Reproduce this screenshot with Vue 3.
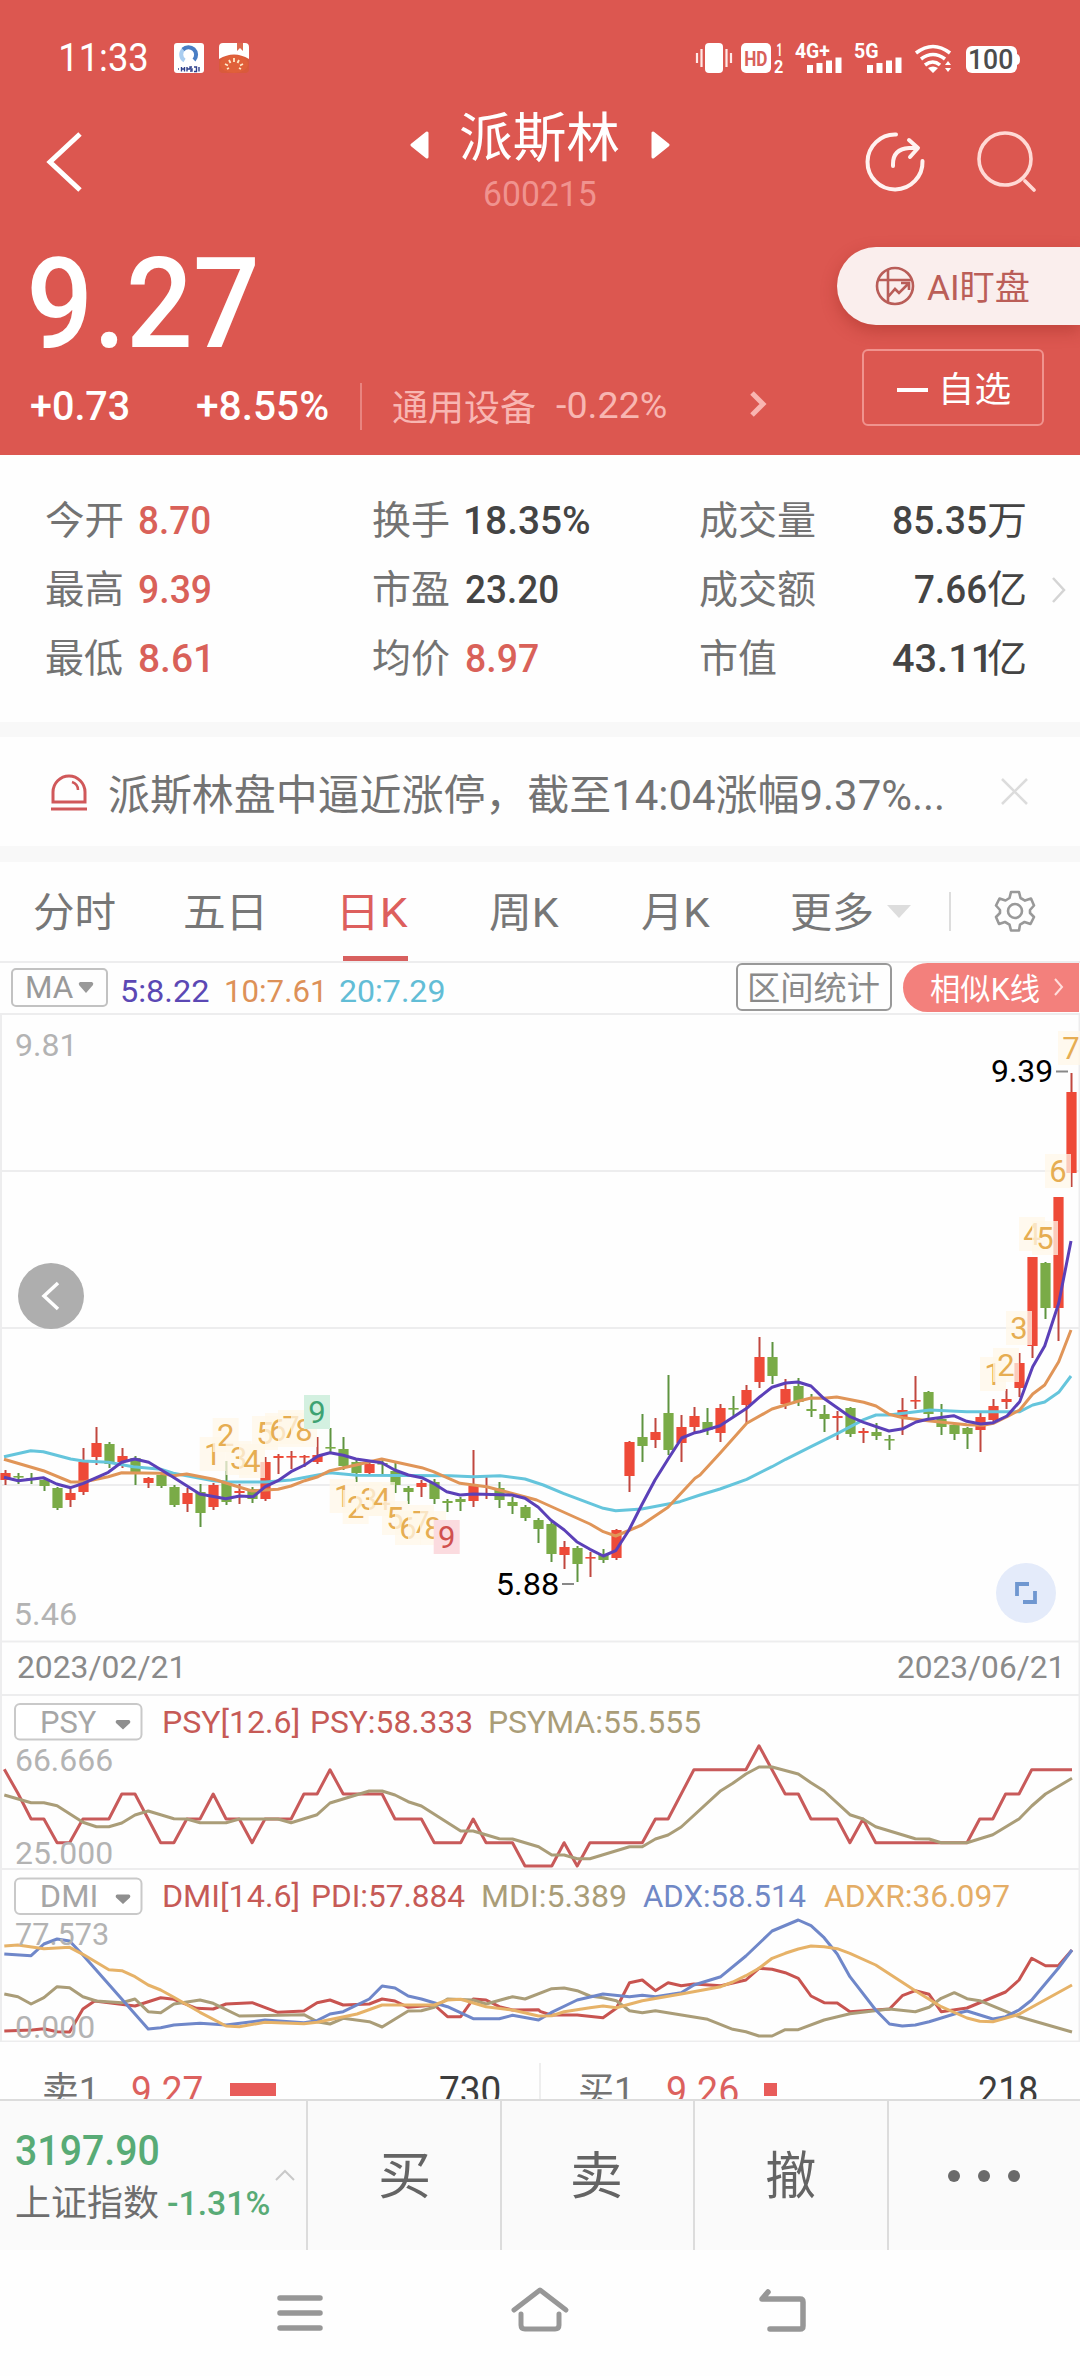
<script setup>
const canvas = document.createElement('canvas').getContext('2d')

// Stretches a label so that its ink is exactly the given width.
// HTML: v-fit="width". SVG: v-fit="[x, baseline, width]".
const vFit = {
  mounted(el, { value }) {
    const cs = getComputedStyle(el)
    canvas.font = `${cs.fontWeight} ${cs.fontSize} ${cs.fontFamily}`
    const m = canvas.measureText(el.textContent.trim())
    const left = -m.actualBoundingBoxLeft
    const ink = m.actualBoundingBoxRight - left
    if (Array.isArray(value)) {
      const [x, y, w] = value
      const k = w / ink
      el.setAttribute('transform', `translate(${x - left * k} ${y}) scale(${k} 1)`)
    } else {
      const k = value / ink
      el.style.width = `${value}px`
      el.style.transform = `translateX(${-left * k}px) scaleX(${k})`
    }
  },
}

const stats = [
  ['今开', 76, '8.70', 71, true], ['换手', 76, '18.35%', 123, false], ['成交量', 115, '85.35', 93, false, '万'],
  ['最高', 76, '9.39', 71, true], ['市盈', 76, '23.20', 92, false], ['成交额', 115, '7.66', 71, false, '亿'],
  ['最低', 76, '8.61', 69, true], ['均价', 76, '8.97', 72, true], ['市值', 76, '43.11', 93, false, '亿'],
]

const tabs = [
  ['分时', 81, 't1'], ['五日', 77, 't2'], ['日K', 65, 't3'], ['周K', 69, 't4'], ['月K', 68, 't5'], ['更多', 81, 't6'],
]

// direction, high, body top, body bottom, low
const candles = `r 1470 1473 1480 1485|g 1473 1476 1477 1484|g 1473 1478 1479 1484|g 1477 1480 1486 1491|g 1487 1488 1508 1510
r 1489 1493 1500 1507|r 1448 1462 1492 1495|r 1427 1443 1457 1465|g 1442 1444 1464 1468|r 1448 1456 1462 1468
g 1456 1458 1472 1485|r 1477 1478 1483 1488|g 1473 1475 1486 1488|g 1485 1487 1505 1507|r 1488 1493 1504 1512
g 1484 1492 1513 1527|r 1483 1485 1507 1510|g 1461 1483 1502 1505|r 1484 1491 1493 1504|g 1487 1489 1499 1503
r 1457 1462 1499 1501|r 1454 1456 1458 1474|r 1451 1456 1457 1469|r 1455 1456 1457 1467|r 1437 1455 1462 1464
g 1428 1447 1448 1453|g 1437 1449 1466 1470|g 1460 1462 1473 1482|r 1463 1464 1473 1474|g 1460 1463 1464 1475
g 1463 1471 1485 1493|g 1486 1488 1492 1504|r 1480 1483 1487 1497|g 1479 1482 1499 1504|g 1499 1501 1503 1512
g 1497 1499 1502 1511|r 1450 1486 1501 1507|r 1477 1493 1495 1499|g 1482 1488 1500 1508|g 1497 1502 1506 1514
g 1505 1507 1518 1521|g 1518 1520 1529 1543|g 1522 1524 1554 1562|r 1541 1547 1555 1569|g 1546 1548 1564 1582
r 1552 1557 1558 1577|g 1549 1554 1560 1563|r 1529 1530 1558 1560|r 1441 1442 1476 1492|g 1414 1437 1446 1462
r 1418 1432 1440 1448|g 1375 1413 1450 1455|r 1415 1427 1443 1462|r 1407 1416 1427 1432|g 1408 1422 1430 1435
r 1404 1408 1433 1442|g 1396 1408 1409 1417|r 1385 1390 1405 1423|r 1337 1357 1382 1388|g 1342 1357 1376 1384
r 1379 1389 1404 1409|g 1378 1386 1402 1406|g 1394 1409 1411 1417|g 1405 1414 1419 1432|r 1411 1416 1418 1440
g 1407 1408 1434 1437|r 1428 1431 1433 1443|g 1423 1432 1436 1440|g 1435 1439 1440 1450|r 1398 1410 1417 1435
r 1376 1400 1401 1409|g 1391 1392 1414 1418|g 1404 1419 1427 1435|g 1423 1425 1434 1440|g 1427 1428 1434 1449
r 1413 1417 1430 1452|r 1399 1406 1420 1423|r 1389 1399 1402 1409|r 1353 1363 1388 1397|r 1257 1257 1346 1358
g 1262 1263 1308 1319|r 1197 1197 1308 1341|r 1073 1092 1173 1187`
  .split(/[|\n]/)
  .map((row, i) => {
    const [dir, ...v] = row.trim().split(' ')
    const [high, top, bottom, low] = v.map(Number)
    return { dir, high, top, low, x: 5.4 + i * 13, h: Math.max(bottom - top, 1.6) }
  })

// Joins runs of "x,y" pairs; every run has its own origin and horizontal scale.
const join = (...runs) =>
  runs
    .map(([ox, oy, sx, pts]) =>
      pts.split(' ').map((p) => {
        const [x, y] = p.split(',').map(Number)
        return `${(ox + x / sx).toFixed(1)},${(oy + y / 3).toFixed(1)}`
      }).join(' '))
    .join(' ')

const averages = [
  { color: '#65c5dc', points: join(
    [0, 1260, 3, '12,590 92,572 130,575 212,597 250,603 325,607 400,620 482,628 520,640 640,662 680,666 796,666 873,660 990,638'],
    [330, 1300, 3, '80,526 360,527 430,530 510,527 585,537 640,555 700,580 820,625 857,632 935,627 1050,605'],
    [700, 1260, 3, '0,705 60,687 140,658 216,620 257,598 333,560 413,520 491,479 528,465 567,465 648,455 690,450 800,455 921,455 959,455 998,435 1034,426 1076,397 1113,348']) },
  { color: '#e09558', points: join(
    [0, 1260, 3, '12,598 130,632 212,666 250,666 325,650 365,638 482,640 520,647 560,642 641,658 756,693 796,690 834,688 873,678 914,662 954,650 990,632 1068,615'],
    [330, 1300, 3, '155,477 275,503 310,515 390,550 470,560 620,600 780,672 820,695 857,708 935,675 1014,622 1095,535'],
    [700, 1260, 3, '0,645 60,580 140,490 216,447 294,424 333,414 371,415 410,411 491,427 528,438 567,463 609,473 648,478 683,482 800,494 850,496 880,490 921,470 959,450 998,402 1034,375 1076,305 1113,210']) },
  { color: '#5b40b8', points: join(
    [0, 1260, 3, '12,652 55,662 130,653 170,672 212,683 250,670 325,637 365,607 404,597 446,607 520,652 599,702 677,716 719,708 760,710 796,680 834,662 873,635 914,615 954,588 990,578'],
    [330, 1300, 3, '40,466 78,477 155,488 194,510 235,525 275,533 310,550 350,575 390,585 430,582 545,585 585,595 625,622 662,660 703,690 740,725 780,748 820,768 857,752 897,690 935,615 975,540 1014,478 1055,414 1095,398'],
    [700, 1260, 3, '0,515 60,497 140,445 180,410 216,382 257,369 294,366 333,378 371,415 450,470 491,487 567,513 609,506 648,486 683,478 761,467 800,484 842,492 880,488 921,468 959,425 998,320 1034,258 1076,130 1113,-57']) },
]

const tags = [
  [1, 212.7, 1454], [2, 225.7, 1435], [3, 238.7, 1458], [4, 252, 1461], [5, 265, 1433], [6, 278, 1430], [7, 291, 1427], [8, 304, 1430], [9, 317, 1412, 'up'],
  [1, 342.7, 1496], [2, 355.7, 1507], [3, 369, 1499], [4, 382, 1499], [5, 395, 1518], [6, 408, 1528], [7, 421, 1522], [8, 433, 1528], [9, 446.7, 1537, 'down'],
  [1, 993, 1374], [2, 1006, 1365], [3, 1019, 1328], [4, 1032, 1234], [5, 1045, 1238], [6, 1058, 1171], [7, 1071, 1048],
]

const psy = [
  { color: '#c85a5a', points: join(
    [0, 1640, 2.8, '12,388 50,460 87,537 123,537 160,608 195,608 232,537 305,537 341,462 378,462 450,608 487,608 523,537 560,537 597,462 633,537 670,537 706,608 742,537 815,537 851,462 888,462 924,389 961,462 1070,462 1106,537 1180,537 1216,608 1290,608 1325,537 1361,608 1435,608 1470,678 1545,678'],
    [540, 1640, 2.904, '70,608 108,678 145,608 297,608 335,537 372,537 447,389 598,389 636,317 712,462 750,462 787,537 863,537 900,608 938,537 975,608 1240,608 1277,537 1315,537 1352,462 1391,462 1428,389 1545,389']) },
  { color: '#aa9d78', points: join(
    [0, 1640, 2.8, '12,465 87,488 123,488 160,497 232,547 270,560 305,560 341,549 378,525 415,513 487,536 523,537 560,548 633,548 670,537 778,537 815,548 888,524 924,489 1034,453 1070,453 1106,465 1143,485 1180,498 1290,573 1325,573 1398,596 1435,597 1508,620 1545,645'],
    [540, 1640, 2.904, '70,645 108,656 145,656 260,620 297,620 335,597 372,585 410,561 525,452 560,430 598,402 636,381 674,381 750,402 787,428 825,453 900,524 938,537 975,560 1090,596 1130,597 1165,608 1240,608 1315,584 1391,537 1428,498 1468,462 1545,415']) },
]

const dmi = [
  { color: '#c85450', points: join(
    [0, 1640, 2.8, '12,1173 90,1170 123,1166 160,1175 195,1176 232,1107 265,1083 378,1098 450,1073 487,1078 550,1105 597,1107 633,1092 706,1088 778,1117 851,1113 888,1088 924,1080 961,1095 1034,1092 1070,1077 1106,1083 1143,1102 1216,1095 1253,1130 1290,1130 1325,1077 1361,1080 1398,1100 1435,1110 1508,1109'],
    [540, 1640, 2.904, '0,1114 32,1125 108,1125 183,1133 222,1105 260,1028 297,1020 335,1052 372,1028 410,1037 447,1032 525,1037 598,1020 636,985 674,988 712,998 750,1015 787,1068 825,1088 863,1089 900,1115 1015,1107 1052,1067 1090,1052 1130,1063 1165,1115 1240,1104 1352,1056 1391,1020 1428,955 1468,977 1505,977 1545,930']) },
  { color: '#aa9d78', points: join(
    [0, 1640, 2.8, '12,1062 50,1070 87,1092 123,1073 160,1040 195,1043 232,1070 270,1083 341,1088 378,1077 415,1115 450,1118 487,1092 560,1080 597,1090 670,1128 851,1124 888,1145 924,1152 961,1135 1034,1145 1070,1161 1143,1113 1180,1112 1216,1102 1253,1077 1325,1080 1361,1092 1435,1070 1470,1077 1545,1046'],
    [540, 1640, 2.904, '70,1044 108,1052 145,1068 183,1073 222,1082 260,1112 297,1118 335,1112 487,1138 560,1168 598,1175 636,1188 674,1188 712,1169 750,1169 825,1140 900,1121 1015,1107 1090,1115 1130,1102 1165,1075 1203,1058 1240,1076 1277,1082 1391,1130 1545,1176']) },
  { color: '#6f87c9', points: join(
    [0, 1640, 2.8, '12,942 87,947 123,912 160,897 195,903 232,945 415,1167 450,1163 487,1155 560,1150 633,1155 742,1140 851,1148 888,1142 924,1122 961,1115 1034,1077 1070,1038 1106,1044 1143,1068 1180,1077 1253,1100 1325,1136 1398,1136 1435,1126 1508,1140'],
    [540, 1640, 2.904, '32,1118 108,1080 183,1062 260,1070 297,1066 335,1070 410,1058 447,1035 525,1010 598,948 674,873 750,840 787,857 825,893 863,942 900,1010 975,1110 1015,1152 1052,1158 1090,1155 1130,1145 1203,1122 1240,1113 1315,1137 1352,1130 1391,1110 1428,1080 1505,985 1545,930']) },
  { color: '#e6b268', points: join(
    [0, 1640, 2.8, '12,918 50,915 123,926 195,922 232,943 305,989 341,992 378,1010 415,1035 450,1050 487,1072 560,1117 633,1158 670,1160 742,1147 851,1151 888,1147 1000,1122 1070,1095 1216,1095 1253,1080 1290,1078 1361,1100 1435,1110 1508,1128 1545,1127'],
    [540, 1640, 2.904, '70,1115 145,1103 183,1098 222,1103 297,1082 410,1062 525,1040 560,1026 598,1007 636,985 674,955 712,940 750,927 787,918 825,920 863,926 900,940 975,975 1090,1052 1165,1100 1240,1134 1277,1144 1315,1145 1391,1123 1428,1102 1545,1035']) },
]
</script>

<template>
  <div class="screen">
    <header class="header">
      <div class="status">
        <span v-fit="86" class="clock">11:33</span>
        <svg class="app-a" width="30" height="30" viewBox="0 0 30 30">
          <rect width="30" height="30" rx="3" fill="#fff" />
          <path d="M10.500 17.500A7 7 0 0 1 10 6" fill="none" stroke="#a9cdf0" stroke-width="4" />
          <path d="M9 6.500A7.500 7.500 0 1 1 20 17" fill="none" stroke="#4a7ec4" stroke-width="4" />
          <path d="M4 26h1M7.500 24v4.500M10.500 24v4.500M7.500 26h3M13 24v4.500M13 26h3M18 24h-2v2h2v2h-2M20 24h2.500v4.500H20M25 24v4.500" stroke="#30418c" stroke-width="1.400" fill="none" />
        </svg>
        <svg class="app-b" width="30" height="30" viewBox="0 0 30 30">
          <rect width="30" height="30" rx="4" fill="#d95a3c" />
          <path d="M4 0H26a4 4 0 0 1 4 4V16Q15 7 0 16V4A4 4 0 0 1 4 0Z" fill="#fff" />
          <path d="M18 0h6v8l-3-3-3 3Z" fill="#dc6a50" />
          <ellipse cx="15" cy="21" rx="14" ry="9" fill="#e0603a" />
          <path d="M15 15v4M10 17l1.500 3M20 17l-1.500 3M6 21l3 1.500M24 21l-3 1.500M8 26l2-1M22 26l-2-1" stroke="#ffe9c8" stroke-width="1.800" />
        </svg>
        <svg class="signals" width="326" height="34" viewBox="695 41 326 34" fill="#fff">
          <rect x="705" y="43" width="18" height="30" rx="4" />
          <path d="M697 53v10M701.500 49v18M726.500 49v18M731 53v10" stroke="#ffe9e7" stroke-width="2.200" />
          <rect x="741" y="43" width="30" height="30" rx="5" />
          <text v-fit="[745, 65.500, 22]" class="hd">HD</text>
          <text v-fit="[777, 56, 4]" class="sub">1</text>
          <text v-fit="[774, 72.500, 9]" class="sub">2</text>
          <text v-fit="[795, 58, 35]" class="net">4G+</text>
          <path d="M810 65v8M819.500 63v10M829 60.500v12.500M838.500 57.500v15.500" stroke="#fff" stroke-width="6" />
          <text v-fit="[855, 58, 23]" class="net">5G</text>
          <path d="M870 65v8M879.500 63v10M889 60.500v12.500M898.500 57.500v15.500" stroke="#fff" stroke-width="6" />
          <path d="M916 53Q933 40 950 53M921 59Q933 50 945 59M925 65Q933 59 940 65" fill="none" stroke="#fff" stroke-width="3.600" />
          <path d="M928 68Q933 65 938 68L933 73ZM945 65l3-4 3 4zM945 68l3 4 3-4z" />
          <rect x="966" y="46" width="51" height="27" rx="6" />
          <path d="M1017 54q3 1 3 5.500t-3 5.500z" />
          <text v-fit="[970, 68.500, 42]" class="battery">100</text>
        </svg>
      </div>

      <div class="navbar">
        <svg class="back" width="38" height="62" viewBox="0 0 38 62"><path d="M35 3 5 31 35 59" fill="none" stroke="#fff" stroke-width="5" /></svg>
        <svg class="prev" width="19" height="28" viewBox="0 0 19 28"><path d="M17 2v24L2 14Z" fill="#fff" stroke="#fff" stroke-width="3" stroke-linejoin="round" /></svg>
        <div class="title">
          <span v-fit="158" class="name">派斯林</span>
          <span v-fit="111" class="code">600215</span>
        </div>
        <svg class="next" width="19" height="28" viewBox="0 0 19 28"><path d="M2 2v24L17 14Z" fill="#fff" stroke="#fff" stroke-width="3" stroke-linejoin="round" /></svg>
        <svg class="share" width="60" height="60" viewBox="0 0 60 60" fill="none" stroke="#fff2f0" stroke-width="4" stroke-linecap="round" stroke-linejoin="round">
          <path d="M31 2.500A27.500 27.500 0 1 0 57.500 29" />
          <path d="M28 34V32Q28 17 44 16H51M44 8l9 8-8 9" />
        </svg>
        <svg class="search" width="60" height="62" viewBox="0 0 60 62" fill="none" stroke="#ffd9d5" stroke-width="3.600" stroke-linecap="round">
          <circle cx="29" cy="28" r="26" /><path d="M49 50 58 59" />
        </svg>
      </div>

      <div class="quote">
        <div class="figures">
          <div class="price"><span v-fit="224">9.27</span></div>
          <div class="change">
            <span v-fit="98" class="delta">+0.73</span>
            <span v-fit="131" class="delta pct">+8.55%</span>
            <i class="bar"></i>
            <span v-fit="143" class="sector cjk">通用设备</span>
            <span v-fit="110" class="sector sector-pct">-0.22%</span>
            <svg class="more" width="20" height="30" viewBox="0 0 20 30"><path d="M4 4 15 15 4 26" fill="none" stroke="#f9b5b1" stroke-width="5" /></svg>
          </div>
        </div>
        <div class="actions">
          <div class="ai">
            <svg width="40" height="40" viewBox="0 0 40 40" fill="none" stroke="#b95d58" stroke-width="2.600">
              <circle cx="20" cy="20" r="18" /><path d="M13 4V36M3 14H37M13 31l7-8 4 4 9-9M26 17h8v7" />
            </svg>
            <span v-fit="102" class="cjk">AI盯盘</span>
          </div>
          <div class="watch"><i></i><span v-fit="67" class="cjk">自选</span></div>
        </div>
      </div>
    </header>

    <section class="stats">
      <div class="grid">
        <div v-for="[label, lw, value, vw, red, unit] in stats" :key="label" class="cell">
          <span v-fit="lw" class="label">{{ label }}</span>
          <div class="amount">
            <span v-fit="vw" class="value" :class="{ red }">{{ value }}</span>
            <span v-if="unit" v-fit="37" class="unit">{{ unit }}</span>
          </div>
        </div>
      </div>
      <svg width="16" height="28" viewBox="0 0 16 28"><path d="M2 2 13 14 2 26" fill="none" stroke="#d4d4d4" stroke-width="2.500" /></svg>
    </section>

    <section class="notice">
      <svg width="38" height="38" viewBox="0 0 38 38" fill="none" stroke="#d0585a" stroke-width="3">
        <path d="M3 29V19A16 16 0 0 1 35 19V29ZM1 36H37" /><path d="M22 9Q28 11 28 17" stroke-width="2.500" />
      </svg>
      <span v-fit="833">派斯林盘中逼近涨停，截至14:04涨幅9.37%...</span>
      <svg class="close" width="27" height="27" viewBox="0 0 27 27"><path d="M1 1 26 26M26 1 1 26" stroke="#dcdcdc" stroke-width="2.500" /></svg>
    </section>

    <nav class="tabs">
      <span v-for="[name, w, cls] in tabs" :key="name" class="tab" :class="cls"><span v-fit="w">{{ name }}</span></span>
      <svg class="caret" width="24" height="13" viewBox="0 0 24 13"><path d="M0 0H24L12 13Z" fill="#ddd" /></svg>
      <i class="sep"></i>
      <svg class="gear" width="42" height="42" viewBox="0 0 42 42" fill="none" stroke="#999" stroke-width="2.600" stroke-linejoin="round">
        <path d="M17 2h8l1.500 6 4.500 2.600 6-2L40 15.500 36 20v3l4 4-3.500 7-6-2-4.500 2.600L25 40.500H17L15.500 34.600 11 32l-6 2L2 27l4-4V20L2 15.500 5.500 8.500l6 2L15.500 8Z" />
        <circle cx="21" cy="21" r="7" />
      </svg>
    </nav>

    <section class="ma">
      <span class="ma-box"><span v-fit="46">MA</span><svg width="16" height="11" viewBox="0 0 16 11"><path d="M2 0H14Q16 1 15 3L8 11 1 3Q0 1 2 0Z" fill="#999" /></svg></span>
      <span v-fit="87" class="m5">5:8.22</span>
      <span v-fit="96" class="m10">10:7.61</span>
      <span v-fit="104" class="m20">20:7.29</span>
      <span class="range"><span v-fit="129">区间统计</span></span>
      <span class="similar"><span v-fit="109">相似K线</span><svg width="12" height="20" viewBox="0 0 12 20"><path d="M2 2 9 10 2 18" fill="none" stroke="#ffdedc" stroke-width="2" /></svg></span>
    </section>

    <svg class="chart" width="1080" height="1029" viewBox="0 1013 1080 1029">
      <g stroke="#ededee" stroke-width="2" fill="none">
        <path d="M0 1014H1080M0 1171H1080M0 1328H1080M0 1485H1080M0 1641.500H1080M0 1695H1080M0 1869H1080M0 2041.500H1080M1 1013V2042M1079.500 1013V2042" />
      </g>
      <text v-fit="[16, 1056, 55]" class="axis">9.81</text>
      <text v-fit="[16, 1625, 60]" class="axis">5.46</text>

      <g v-for="c in candles" :key="c.x" :class="c.dir">
        <rect :x="c.x - 0.9" :y="c.high" width="2" :height="c.low - c.high" class="wick" />
        <rect :x="c.x - 5" :y="c.top" width="10.200" :height="c.h" class="body" />
      </g>

      <g v-for="[n, x, y, kind] in tags" :key="`${n}-${x}`" class="tag" :class="kind">
        <rect :x="x - 13" :y="y - 17" width="26" height="34" />
        <text :x="x" :y="y + 11">{{ n }}</text>
      </g>

      <g class="lines"><polyline v-for="l in averages" :key="l.color" :points="l.points" :stroke="l.color" /></g>

      <path d="M1056 1071.500H1068M562 1584H574" stroke="#888" stroke-width="2" />
      <text v-fit="[992, 1082, 60]" class="mark">9.39</text>
      <text v-fit="[498, 1595, 60]" class="mark">5.88</text>

      <circle cx="51" cy="1296" r="33" fill="#aeaeae" />
      <path d="M58 1283 44 1296 58 1309" fill="none" stroke="#fff" stroke-width="3.500" />
      <circle cx="1026" cy="1593" r="30" fill="#e4ebfa" />
      <path d="M1029 1584H1017V1596M1035 1591V1602H1023" fill="none" stroke="#6f97d0" stroke-width="3.800" />

      <text v-fit="[18, 1678, 162]" class="date">2023/02/21</text>
      <text v-fit="[898, 1678, 161]" class="date">2023/06/21</text>

      <g class="lines"><polyline v-for="l in psy" :key="l.color" :points="l.points" :stroke="l.color" /></g>
      <g class="lines"><polyline v-for="l in dmi" :key="l.color" :points="l.points" :stroke="l.color" /></g>
      <text v-fit="[16, 1771, 96]" class="axis">66.666</text>
      <text v-fit="[16, 1864, 96]" class="axis">25.000</text>
      <text v-fit="[16, 1945, 92]" class="axis">77.573</text>
      <text v-fit="[16, 2038, 78]" class="axis">0.000</text>

      <g fill="#fff" stroke="#c9c9c9" stroke-width="2">
        <rect x="15" y="1704" width="126.500" height="35.500" rx="5" />
        <rect x="15" y="1878.500" width="126.500" height="35.500" rx="5" />
      </g>
      <path d="M117 1720h12q2 1 1 3l-7 6.500-7-6.500q-1-2 1-3zM117 1894.500h12q2 1 1 3l-7 6.500-7-6.500q-1-2 1-3z" fill="#8f8f8f" />
      <text v-fit="[42, 1733, 55]" class="pick">PSY</text>
      <text v-fit="[42, 1907, 54]" class="pick">DMI</text>
      <g fill="#c65a56">
        <text v-fit="[164, 1732.500, 134]">PSY[12.6]</text>
        <text v-fit="[312, 1732.500, 160]">PSY:58.333</text>
        <text v-fit="[164, 1906.500, 134]">DMI[14.6]</text>
        <text v-fit="[313, 1906.500, 152]">PDI:57.884</text>
      </g>
      <g fill="#aa9d78">
        <text v-fit="[490, 1732.500, 210]">PSYMA:55.555</text>
        <text v-fit="[483, 1906.500, 143]">MDI:5.389</text>
      </g>
      <text v-fit="[643, 1906.500, 163]" fill="#7088c6">ADX:58.514</text>
      <text v-fit="[824, 1906.500, 185]" fill="#e4ad66">ADXR:36.097</text>
    </svg>

    <section class="book">
      <div class="side sell">
        <span v-fit="48" class="who">卖1</span><span v-fit="70" class="bid">9.27</span><i class="vol wide"></i><span v-fit="60" class="qty">730</span>
      </div>
      <div class="side buy">
        <span v-fit="48" class="who">买1</span><span v-fit="71" class="bid">9.26</span><i class="vol"></i><span v-fit="58" class="qty">218</span>
      </div>
    </section>

    <footer class="trade">
      <div class="index">
        <div class="index-text">
          <span v-fit="142" class="points">3197.90</span>
          <div class="index-row"><span v-fit="142" class="index-name">上证指数</span><span v-fit="101" class="index-pct">-1.31%</span></div>
        </div>
        <svg class="fold" width="20" height="12" viewBox="0 0 20 12"><path d="M1 11 10 2 19 11" fill="none" stroke="#c8c8c8" stroke-width="2" /></svg>
      </div>
      <div class="act"><span v-fit="48">买</span></div>
      <div class="act"><span v-fit="48">卖</span></div>
      <div class="act"><span v-fit="49">撤</span></div>
      <div class="act dots"><i></i><i></i><i></i></div>
    </footer>

    <div class="system">
      <svg width="46" height="44" viewBox="0 0 46 44" stroke="#979797" stroke-width="5.500" stroke-linecap="round"><path d="M3 8H43M3 23H43M3 38H43" /></svg>
      <svg width="60" height="48" viewBox="0 0 60 48" fill="none" stroke="#979797" stroke-width="5" stroke-linecap="round" stroke-linejoin="round"><path d="M4 24 30 4 56 24" /><path d="M11 28V39Q11 43 15 43H45Q49 43 49 39V28" /></svg>
      <svg width="50" height="48" viewBox="0 0 50 48" fill="none" stroke="#979797" stroke-width="5.500" stroke-linecap="round" stroke-linejoin="round"><path d="M13 43H43Q46 43 46 40V16Q46 13 43 13H5L11 6" /></svg>
    </div>
  </div>
</template>

<style>
body {
  margin: 0;
  background: #fefefe;
}
</style>

<style scoped>
.screen {
  width: 1080px;
  height: 2376px;
  overflow: hidden;
  display: flex;
  flex-direction: column;
  background: #fefefe;
  font-family: Roboto, "Noto Sans CJK SC", sans-serif;
}
.screen > * {
  flex-shrink: 0;
  box-sizing: border-box;
}
span {
  white-space: nowrap;
  transform-origin: 0 50%;
}
svg {
  display: block;
  flex-shrink: 0;
}

.header {
  height: 455px;
  background: #dc5750;
  color: #fff;
}
.status {
  height: 90px;
  padding: 26px 59px 0 61px;
  box-sizing: border-box;
  display: flex;
  align-items: center;
}
.clock { font-size: 39px; }
.app-a { margin-left: 27px; }
.app-b { margin-left: 15px; }
.signals { margin-left: auto; }
.hd { font-size: 21px; font-weight: 700; fill: #d8605a; }
.sub { font-size: 18px; font-weight: 700; }
.net { font-size: 20px; font-weight: 700; }
.battery { font-size: 27px; font-weight: 500; fill: #4c4c4c; }

.navbar {
  height: 144px;
  display: flex;
  align-items: center;
}
.back { margin-left: 45px; }
.prev { margin-left: 327px; margin-bottom: 34px; }
.next { margin-left: 32px; margin-bottom: 34px; }
.title {
  margin-left: 32px;
  width: 158px;
  display: flex;
  flex-direction: column;
  gap: 6px;
}
.name { font-size: 53px; line-height: 60px; }
.code { font-size: 35px; line-height: 40px; margin-left: 24px; color: #f0938f; }
.share { margin-left: 195px; }
.search { margin-left: 51px; }

.quote {
  display: flex;
  justify-content: space-between;
}
.figures { padding-left: 31px; }
.cjk { padding-bottom: 3px; }
.price {
  padding-top: 2px;
  font-size: 127px;
  line-height: 136px;
  font-weight: 500;
  display: flex;
}
.change {
  margin-top: 9px;
  height: 50px;
  display: flex;
  align-items: center;
}
.delta { font-size: 41px; font-weight: 500; }
.pct { margin-left: 68px; }
.bar { width: 2px; height: 47px; margin: 0 31px 0 32px; background: #e98480; }
.sector { font-size: 36px; color: #f8b6b2; }
.sector-pct { margin-left: 20px; }
.more { margin-left: 82px; margin-bottom: 4px; }
.ai {
  width: 243px;
  height: 78px;
  margin-top: 13px;
  padding-left: 38px;
  box-sizing: border-box;
  display: flex;
  align-items: center;
  gap: 12px;
  border-radius: 39px 0 0 39px;
  background: #faeeed;
  box-shadow: 0 6px 16px rgba(150, 40, 30, .4);
  color: #bb5e58;
  font-size: 35px;
}
.watch {
  width: 182px;
  height: 77px;
  margin: 24px 0 0 25px;
  box-sizing: border-box;
  border: 2px solid #f0938e;
  border-radius: 6px;
  display: flex;
  align-items: center;
  font-size: 35px;
}
.watch i { width: 31px; height: 4px; margin: 5px 15px 0 33px; background: #fff; }

.stats {
  height: 267px;
  padding: 31px 15px 32px 46px;
  display: flex;
  align-items: flex-start;
  gap: 26px;
}
.stats svg { margin-top: 90px; }
.grid {
  display: grid;
  grid-template-columns: 327px 327px 325px;
  grid-auto-rows: 69px;
  align-items: center;
}
.cell {
  display: flex;
  align-items: center;
  gap: 17px;
  font-size: 39px;
  line-height: 50px;
}
.cell:nth-child(3n) { justify-content: space-between; }
.amount { display: flex; gap: 2px; }
.label { color: #737373; }
.value { color: #444; font-weight: 500; }
.unit { color: #444; }
.red { color: #d96159; }

.notice {
  height: 140px;
  border-top: 15px solid #f8f8f8;
  border-bottom: 16px solid #f8f8f8;
  padding-left: 50px;
  display: flex;
  align-items: center;
  font-size: 42px;
  color: #737373;
}
.notice span { margin-left: 21px; }
.close { margin-left: 59px; }

.tabs {
  height: 99px;
  display: flex;
  align-items: center;
  font-size: 41px;
  color: #777;
}
.tab {
  height: 99px;
  display: flex;
  align-items: center;
  box-sizing: border-box;
  padding-bottom: 6px;
}
.t1 { margin-left: 34px; }
.t2 { margin-left: 70px; }
.t3 { margin-left: 81px; color: #dd5f5d; border-top: 5px solid transparent; border-bottom: 5px solid #d8605f; }
.t4 { margin-left: 82px; }
.t5 { margin-left: 83px; }
.t6 { margin-left: 81px; }
.caret { margin-left: 15px; }
.sep { width: 2px; height: 39px; margin-left: 38px; background: #ddd; }
.gear { margin-left: 43px; margin-bottom: 2px; }

.ma {
  height: 52px;
  border-top: 2px solid #ededee;
  display: flex;
  align-items: center;
  font-size: 31px;
}
.ma-box {
  width: 97px;
  height: 39px;
  margin: 0 0 2px 11px;
  box-sizing: border-box;
  border: 2px solid #c2c2c2;
  border-radius: 5px;
  display: flex;
  align-items: center;
  gap: 5px;
  padding-left: 14px;
  color: #999;
}
.m5 { margin-left: 14px; color: #5b48b4; padding-top: 7px; }
.m10 { margin-left: 17px; color: #dd9158; padding-top: 7px; }
.m20 { margin-left: 18px; color: #62bdd6; padding-top: 7px; }
.range {
  width: 156px;
  height: 48px;
  margin: 0 0 2px 292px;
  padding-bottom: 3px;
  box-sizing: border-box;
  border: 2px solid #999;
  border-radius: 6px;
  display: flex;
  align-items: center;
  justify-content: center;
  color: #8a8a8a;
  font-size: 33px;
}
.similar {
  width: 176px;
  height: 49px;
  margin: 0 0 1px 11px;
  padding: 0 0 2px 27px;
  box-sizing: border-box;
  border-radius: 25px 0 0 25px;
  background: #f3807c;
  color: #fff;
  display: flex;
  align-items: center;
  gap: 14px;
  font-size: 31px;
}

.chart { font-size: 30.500px; }
.axis { fill: #b3b3b3; }
.date { fill: #8a8a8a; }
.pick { fill: #a6a6a6; }
.mark { fill: #000; }
.lines { fill: none; stroke-width: 3; stroke-linejoin: round; }
.r .body { fill: #ee4a38; }
.r .wick { fill: #c0473f; }
.g .body { fill: #7aab47; }
.g .wick { fill: #5f9440; }
.tag rect { fill: rgba(255, 247, 232, .75); }
.tag text { fill: #e6ad52; font-size: 31px; text-anchor: middle; }
.tag.up rect { fill: #d3f0e0; }
.tag.up text { fill: #3da272; }
.tag.down rect { fill: #fbdbdf; }
.tag.down text { fill: #d0504e; }

.book {
  height: 57px;
  overflow: hidden;
  padding-top: 21px;
  display: flex;
}
.side {
  width: 539px;
  height: 56px;
  box-sizing: border-box;
  padding: 0 39px 0 44px;
  display: flex;
  align-items: center;
  font-size: 38px;
}
.buy { width: 541px; border-left: 2px solid #eee; padding: 0 43px 0 38px; }
.who { font-size: 36px; line-height: 40px; color: #737373; }
.bid { margin-left: 40px; color: #dc615e; }
.vol { width: 13px; height: 13px; margin: 0 0 4px 26px; background: #e85c5a; }
.vol.wide { width: 46px; margin-left: 28px; }
.qty { margin-left: auto; color: #3d3d3d; }

.trade {
  height: 151px;
  border-top: 2px solid #dcdcdc;
  background: #fafafa;
  display: flex;
}
.index {
  width: 306px;
  padding-left: 16px;
  box-sizing: border-box;
  display: flex;
}
.index-text { display: flex; flex-direction: column; }
.points { margin-top: 25px; font-size: 42px; line-height: 50px; font-weight: 500; color: #58ab76; }
.index-row { margin-top: 2px; height: 50px; display: flex; align-items: center; }
.index-name { font-size: 36px; color: #6e6e6e; padding-bottom: 6px; }
.index-pct { margin-left: 10px; font-size: 33px; font-weight: 500; color: #58ab76; }
.fold { margin: 68px 0 0 6px; }
.act {
  flex: 1;
  border-left: 2px solid #dcdcdc;
  display: flex;
  align-items: center;
  justify-content: center;
  font-size: 51px;
  color: #646464;
}
.act span { padding-bottom: 8px; }
.dots { gap: 18px; }
.dots i { width: 12px; height: 12px; border-radius: 50%; background: #6a6a6a; }

.system {
  height: 126px;
  padding: 36px 273px 0 277px;
  display: flex;
  justify-content: space-between;
  align-items: flex-start;
}
.system svg:first-child { margin-top: 4px; }
</style>
